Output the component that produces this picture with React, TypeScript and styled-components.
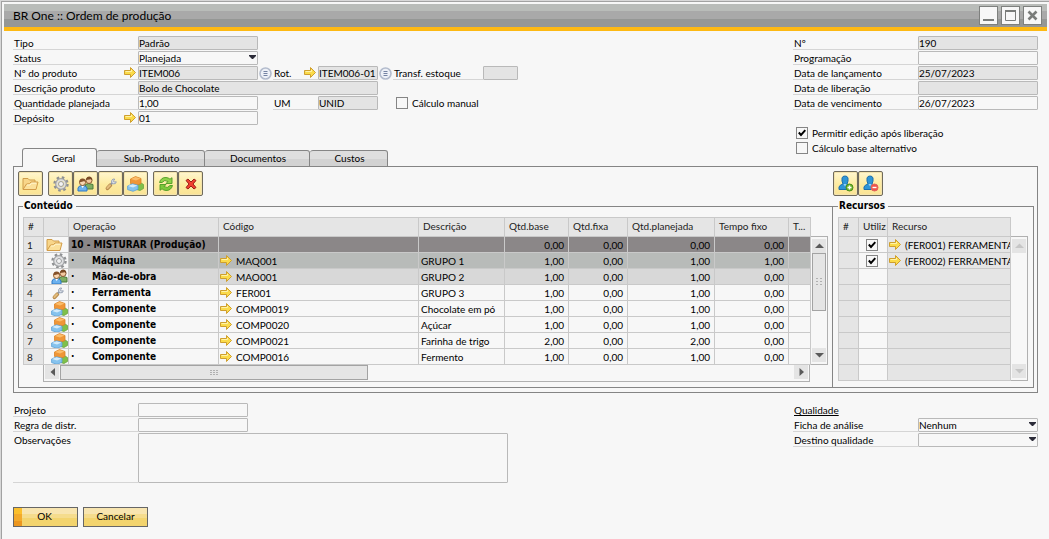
import React, { useId } from "react";
import styled, { createGlobalStyle, css } from "styled-components";

const GlobalStyle = createGlobalStyle`
  *, *::before, *::after { box-sizing: border-box; }
  body {
    margin: 0;
    background: #d8d8d8;
    color: #000;
    font: 10px/13px Lato, "Open Sans", sans-serif;
  }
  button, input, select, textarea { font: inherit; color: inherit; margin: 0; border-radius: 0; }
`;

const boldFace = css`
  font-family: "DejaVu Sans Condensed", "DejaVu Sans", sans-serif;
  font-weight: 700;
`;

/* ---------- window ---------- */

const Window = styled.main`
  min-height: calc(100vh - 1px);
  margin: 1px 0 0 1px;
  padding: 2px;
  border: solid #a2a2a2;
  border-width: 1px 0 0 1px;
  background: #f7f7f7;
`;

const TitleBar = styled.header`
  display: flex;
  align-items: center;
  justify-content: space-between;
  height: 27px;
  padding: 0 5px 0 9px;
  border-bottom: 4px solid #fdb913;
  background: linear-gradient(#b9bcb9 0 7px, #a9a9a9 7px 15px, #959795 15px);
`;

const Title = styled.h1`
  margin: 0;
  padding-top: 1px;
  font-size: 12px;
  line-height: 16px;
  font-weight: 400;
`;

const WindowButtons = styled.div`
  display: flex;
  gap: 3px;
`;

const WindowButton = styled.button`
  display: grid;
  place-items: center;
  width: 19px;
  height: 19px;
  padding: 0;
  border: 1px solid #7e807e;
  background: #f7f7f7;
`;

const Content = styled.form`
  padding: 5px 9px 10px 9px;
`;

/* ---------- form ---------- */

const TopArea = styled.div`
  display: grid;
  grid-template-columns: 1fr 245px;
  grid-template-rows: auto 1fr;
`;

const FormColumn = styled.section`
  display: flex;
  flex-direction: column;
  gap: 1px;
`;

const SideColumn = styled(FormColumn)`
  grid-column: 2;
  grid-row: 1 / span 2;
  padding-bottom: 12px;
`;

const FormRow = styled.div`
  display: flex;
  min-height: 14px;
`;

const Label = styled.label<{ $w?: number }>`
  display: flex;
  align-items: flex-start;
  justify-content: space-between;
  flex: none;
  width: ${(p) => p.$w ?? 125}px;
  padding: 1px 2px 0 1px;
  line-height: 12px;
  border-bottom: 1px solid #d5d5d5;
  white-space: nowrap;
`;

const fieldBox = css`
  border: 1px solid #b9b9b9;
  border-radius: 1px;
  background: #f7f7f7;
  outline: none;
`;

const Input = styled.input<{ $w?: number }>`
  ${fieldBox}
  flex: none;
  width: ${(p) => p.$w ?? 120}px;
  height: 14px;
  padding: 0;
  line-height: 12px;
  &:read-only { background: #e4e4e4; }
`;

const SelectBox = styled.span`
  position: relative;
  display: flex;
  width: 120px;
  height: 14px;
  & > svg { position: absolute; top: 4px; right: 2px; pointer-events: none; }
`;

const Select = styled.select`
  ${fieldBox}
  appearance: none;
  width: 100%;
  height: 14px;
  padding: 0;
  line-height: 12px;
`;

const TextArea = styled.textarea`
  ${fieldBox}
  width: 370px;
  height: 50px;
  resize: none;
`;

const PickButton = styled.button`
  display: grid;
  place-items: center;
  width: 15px;
  height: 14px;
  padding: 0;
  border: 0;
  background: none;
`;

const CheckLabel = styled.label<{ $indent?: number }>`
  display: flex;
  align-items: center;
  gap: 4px;
  height: 14px;
  padding-left: ${(p) => p.$indent ?? 3}px;
`;

const CheckList = styled.div`
  display: flex;
  flex-direction: column;
  gap: 1px;
  margin-top: 15px;
`;

const CheckWrap = styled.span`
  position: relative;
  display: inline-flex;
  width: 12px;
  height: 12px;
  & > svg { position: absolute; top: 2px; left: 2px; pointer-events: none; visibility: hidden; }
  & > input:checked + svg { visibility: visible; }
`;

const CheckInput = styled.input`
  appearance: none;
  width: 12px;
  height: 12px;
  border: 1px solid #858585;
  background: #f7f7f7;
`;

const SectionTitle = styled.h2`
  height: 14px;
  margin: 0;
  padding: 1px 1px 0;
  font-size: 10px;
  line-height: 12px;
  font-weight: 400;
  text-decoration: underline;
`;

/* ---------- tabs and panel ---------- */

const TabList = styled.div`
  position: relative;
  z-index: 1;
  display: flex;
  align-items: flex-end;
  align-self: end;
  padding-left: 9px;
`;

const Tab = styled.button<{ $w: number; $active?: boolean }>`
  width: ${(p) => p.$w}px;
  height: ${(p) => (p.$active ? 19 : 17)}px;
  padding: 0 0 1px 2px;
  border: solid #858585;
  border-width: ${(p) => (p.$active ? "1px 1px 0 1px" : "1px 1px 1px 0")};
  border-radius: 3px 3px 0 0;
  background: ${(p) => (p.$active ? "#f7f7f7" : "linear-gradient(#dedede 50%, #d2d2d2 50%)")};
  ${(p) => p.$active && css`padding: 0 0 0 8px;`}
`;

const Panel = styled.section`
  display: grid;
  grid-template-columns: minmax(0, 1fr) 202px;
  margin-top: -1px;
  padding: 4px 3px 4px 4px;
  border: 1px solid #858585;
`;

const Pane = styled.div`
  display: flex;
  flex-direction: column;
  gap: 4px;
`;

const Toolbar = styled.div<{ $inset?: boolean }>`
  display: flex;
  gap: 5px;
  padding-left: ${(p) => (p.$inset ? 1 : 0)}px;
`;

const ToolGroup = styled.div`
  display: flex;
`;

const ToolButton = styled.button`
  display: grid;
  place-items: center;
  width: 25px;
  height: 25px;
  padding: 0;
  border: 1px solid #6f6a5c;
  border-radius: 2px;
  background: linear-gradient(#fff6d0, #fdeb9f 55%, #fae396);
  box-shadow: inset 0 0 0 1px #f3e3ad;
`;

const Group = styled.fieldset<{ $open?: boolean }>`
  flex: 1;
  min-width: 0;
  margin: 0;
  padding: 5px ${(p) => (p.$open ? 4 : 5)}px 5px ${(p) => (p.$open ? 4 : 5)}px;
  border: solid #858585;
  border-width: 1px ${(p) => (p.$open ? 0 : 1)}px 1px 1px;
`;

const Legend = styled.legend`
  ${boldFace}
  padding: 0 3px 0 1px;
  line-height: 12px;
`;

const GridArea = styled.div`
  display: grid;
  grid-template-columns: minmax(0, 1fr) 17px;
`;

/* ---------- data grids ---------- */

const Table = styled.table`
  width: 100%;
  table-layout: fixed;
  border-collapse: separate;
  border-spacing: 0;
`;

const Col = styled.col<{ $w?: number }>`
  width: ${(p) => (p.$w ? `${p.$w}px` : "auto")};
`;

const HeadCell = styled.th`
  height: 20px;
  padding: 0 3px 2px 4px;
  border: solid #c9c9c9;
  border-width: 1px 1px 1px 0;
  background: #e5e5e5;
  color: #222;
  font-weight: 400;
  line-height: 12px;
  text-align: left;
  white-space: nowrap;
  overflow: hidden;
  &:first-child { border-left-width: 1px; }
`;

type Tone = "group" | "selected" | "near" | "plain" | "muted";

const tones: Record<Tone, string> = {
  group: "#8b8788",
  selected: "#b8bbb9",
  near: "#d8d8d8",
  plain: "#f7f7f7",
  muted: "#e5e5e5",
};

const Cell = styled.td<{ $tone?: Tone; $num?: boolean; $flush?: boolean; $bold?: boolean }>`
  height: 16px;
  padding: 0 ${(p) => (p.$num ? 4 : 0)}px 0 ${(p) => (p.$flush ? 1 : 2)}px;
  border: solid #c9c9c9;
  border-width: 0 1px 1px 0;
  background: ${(p) => tones[p.$tone ?? "plain"]};
  line-height: 12px;
  text-align: ${(p) => (p.$num ? "right" : "left")};
  white-space: nowrap;
  overflow: hidden;
  ${(p) => p.$bold && boldFace}
  & svg { display: block; }
`;

const NumberCell = styled(Cell)`
  padding-left: 3px;
  border-left-width: 1px;
  color: #222;
`;

const IconBox = styled.span<{ $right?: boolean }>`
  display: flex;
  height: 15px;
  align-items: center;
  padding-left: ${(p) => (p.$right ? 6 : 1)}px;
`;

const Linked = styled.span`
  display: flex;
  align-items: center;
  gap: 4px;
  overflow: hidden;
  & > svg { flex: none; }
`;

const Bullet = styled.span`
  display: inline-block;
  width: 21px;
`;

/* ---------- scroll bars ---------- */

const VScroll = styled.div`
  display: flex;
  flex-direction: column;
  justify-content: space-between;
  margin-top: 19px;
  padding: 2px 1px;
  border: solid #b0b0b0;
  border-width: 1px 1px 1px 0;
`;

const HScroll = styled.div`
  display: flex;
  justify-content: space-between;
  height: 17px;
  margin: 0 1px 0 20px;
  padding: 0 1px 2px;
  border: solid #b0b0b0;
  border-width: 0 1px 1px 1px;
`;

const ScrollButton = styled.button`
  display: grid;
  place-items: center;
  flex: none;
  width: 14px;
  height: 14px;
  padding: 0;
  border: 0;
  background: #e4e4e4;
`;

const VThumb = styled.div`
  display: grid;
  place-items: center;
  width: 14px;
  height: 58px;
  margin-bottom: auto;
  border: 1px solid #a3a3a3;
  background: #e5e5e5;
`;

const HThumb = styled.div`
  display: grid;
  place-items: center;
  width: 308px;
  height: 15px;
  margin: 0 auto 0 1px;
  border: 1px solid #a3a3a3;
  background: #e5e5e5;
`;

/* ---------- footer ---------- */

const BottomArea = styled.div`
  display: grid;
  grid-template-columns: 1fr 245px;
  margin-top: 10px;
`;

const Actions = styled.footer`
  display: flex;
  gap: 5px;
  margin-top: 24px;
`;

const ActionButton = styled.button<{ $primary?: boolean }>`
  width: 65px;
  height: 20px;
  padding: 0 0 1px;
  border: 1px solid #666;
  background: ${(p) => p.$primary && "linear-gradient(#fbc02d 0 35%, #f3aa2c 35% 70%, #ec961f 70%) left / 8px 100% no-repeat, "}
    linear-gradient(#f8e5b0 0 6px, #f5dc8d 6px 10px, #f3d46e 10px);
  ${(p) => p.$primary && css`padding-right: 2px;`}
`;

/* ---------- icons ---------- */

const ArrowIcon = () => (
  <svg width="12" height="11" viewBox="0 0 12 11">
    <path d="M.5 3.500h6v-3L11.500 5.500l-5 5v-3h-6z" fill="#fbdb4a" stroke="#cf9f2e" />
    <path d="M1.500 4.500h6v-1.500" fill="none" stroke="#fff3a8" />
  </svg>
);

const ListIcon = () => (
  <svg width="13" height="13" viewBox="0 0 13 13">
    <circle cx="6.500" cy="6.500" r="5.500" fill="#eef1f7" stroke="#b3bccd" strokeWidth="1.600" />
    <path d="M4.500 4.500h4M4.500 6.500h4M4.500 8.500h4" stroke="#7584a3" />
  </svg>
);

const CaretIcon = () => (
  <svg width="7" height="5" viewBox="0 0 7 5">
    <path d="M0 0h7v1L4 4H3L0 1z" fill="#2b2b38" />
  </svg>
);

const CheckIcon = () => (
  <svg width="8" height="8" viewBox="0 0 8 8">
    <path d="M.8 3.500L3 6 7.300 1.200" fill="none" stroke="#000" strokeWidth="1.900" />
  </svg>
);

const GripIcon = ({ vertical }: { vertical?: boolean }) => (
  <svg width={vertical ? 6 : 8} height={vertical ? 8 : 6} viewBox={vertical ? "0 0 6 8" : "0 0 8 6"}>
    <path
      d={vertical ? "M0 .5h6M0 3.500h6M0 6.500h6" : "M0 .5h8M0 2.500h8M0 4.500h8"}
      stroke="#b0b0b0"
      strokeDasharray={vertical ? "2 2" : "2 1"}
    />
  </svg>
);

const triangles = {
  up: "M0 6L4.500 1.500 9 6z",
  down: "M0 2h9L4.500 6.500z",
  left: "M7 0v8L2.500 4z",
  right: "M2.500 0v8L7 4z",
};

const Triangle = ({ dir, off }: { dir: keyof typeof triangles; off?: boolean }) => (
  <svg width="9" height="8" viewBox="0 0 9 8">
    <path d={triangles[dir]} fill={off ? "#c6c6c6" : "#5a5a5a"} />
  </svg>
);

const FolderIcon = () => (
  <svg width="17" height="15" viewBox="0 0 17 15">
    <path d="M1 13V2.500h5l1.500 1.500H13V6" fill="#f8d68a" stroke="#cf9d4b" />
    <path d="M1 13.500L4.500 8l3-.3L9 6h7l-2 7.500z" fill="#fbe09a" stroke="#d39c48" strokeLinejoin="round" />
    <path d="M5 9h3l1.500-1.800h4.700" fill="none" stroke="#fff6cf" />
  </svg>
);

const GearIcon = () => (
  <svg width="16" height="16" viewBox="0 0 16 16">
    <circle cx="8" cy="8" r="6.400" fill="none" stroke="#8e9092" strokeWidth="2.600" strokeDasharray="2.500 2.527" />
    <circle cx="8" cy="8" r="5" fill="none" stroke="#a3a5a7" strokeWidth="1.800" />
    <circle cx="8" cy="8" r="4" fill="none" stroke="#dcdddf" strokeWidth="1.400" />
    <circle cx="8" cy="8" r="2.500" fill="#f3f3f3" stroke="#9b9d9f" />
  </svg>
);

const PeopleIcon = () => (
  <svg width="17" height="16" viewBox="0 0 17 16">
    <path d="M8.500 13V8.500Q11 6.500 16 8.500V13z" fill="#7fae62" stroke="#4d7c3c" />
    <circle cx="12" cy="4.500" r="3" fill="#f3c9a0" stroke="#8a5a32" />
    <path d="M9 4Q9.500.5 12.500.6 15.500 1 15.300 4.500L14 3.300z" fill="#7a4a26" />
    <path d="M1 15v-3Q1.500 9.500 5.500 9.500T10 12v3z" fill="#6cb2ef" stroke="#2f78c4" />
    <path d="M4.300 10l1.300 2 1.400-2z" fill="#fff" />
    <circle cx="5.500" cy="6.500" r="3" fill="#f8d6b2" stroke="#94602f" />
    <path d="M2.300 6.500Q2.300 2.500 5.600 2.600 9 2.700 8.800 6.500L7.500 5z" fill="#85512a" />
  </svg>
);

const WrenchIcon = () => (
  <svg width="14" height="14" viewBox="0 0 14 14">
    <path d="M3.500 11.300L6.300 8.300" stroke="#b78a4c" strokeWidth="3.800" strokeLinecap="round" />
    <path d="M3.400 11L6 8.300" stroke="#e3bd7c" strokeWidth="2" strokeLinecap="round" />
    <path d="M7 7.300L8.800 5.600" stroke="#8d97a6" strokeWidth="2" />
    <path d="M11 2.300A2.400 2.400 0 1 0 12.300 4.800L10.300 5 9.300 3.900z" fill="#dbe1ea" stroke="#98a2b3" />
  </svg>
);

const BlocksIcon = () => (
  <svg width="17" height="16" viewBox="0 0 17 16">
    <path d="M9.500 9l4.500-2 2.500 1.500v4L13 14.500 9.500 13.500z" fill="#7fc04a" stroke="#6aa641" strokeWidth=".8" />
    <path d="M3.500 3L8.500.6 14 2.500v5L9 9.500 3.500 7.500z" fill="#ef9637" stroke="#d98326" strokeWidth=".8" strokeLinejoin="round" />
    <path d="M4 3.100L8.500 1l5 1.600L9 4.600z" fill="#fbbd6b" />
    <path d="M.6 10L5.500 7.800l5.500 1.500v4l-5 2-5.400-1.700z" fill="#86c3ee" stroke="#5b9fd6" strokeWidth=".8" strokeLinejoin="round" />
    <path d="M1 10.100l4.500-1.900 5 1.300-4.500 1.900z" fill="#d3ebfb" />
  </svg>
);

const RefreshIcon = () => (
  <svg width="16" height="16" viewBox="0 0 16 16">
    <path d="M1.500 6.500Q3 1.300 8 1.500 10.500 1.700 12 3.200L14 1.700V7.500H8L10 5.500Q6.500 3 4 6.500z" fill="#8fd14a" stroke="#4c9a22" strokeWidth=".9" strokeLinejoin="round" />
    <path d="M14.500 9.500Q13 14.700 8 14.500 5.500 14.300 4 12.800L2 14.300V8.500H8L6 10.500Q9.500 13 12 9.500z" fill="#7cc83a" stroke="#4c9a22" strokeWidth=".9" strokeLinejoin="round" />
  </svg>
);

const DeleteIcon = () => (
  <svg width="12" height="12" viewBox="0 0 12 12">
    <path d="M3 1l3 3 3-3 2 1.500L8 6l3 3.500L9 11 6 8l-3 3-2-1.500L4 6 1 2.500z" fill="#f0402f" stroke="#9c2018" strokeLinejoin="round" />
  </svg>
);

const PersonIcon = ({ remove }: { remove?: boolean }) => (
  <svg width="16" height="17" viewBox="0 0 16 17">
    <path d="M1 14.500V12Q1.500 10 5 9L4 6V3Q4.500 1 7 1t3 2v3L9 9q3.500 1 4 3v2.500z" fill="#2f95d6" stroke="#1c6fae" />
    <path d="M5.500 9L7 11.500 8.500 9z" fill="#9dd3f5" />
    <circle cx="11.500" cy="12.500" r="3.500" fill={remove ? "#f0544a" : "#6fb52c"} stroke={remove ? "#e0655c" : "#4b8d18"} />
    <path d={remove ? "M9.500 12.500h4" : "M9.500 12.500h4M11.500 10.500v4"} stroke="#fff" strokeWidth="1.400" />
  </svg>
);

/* ---------- small parts ---------- */

const Check = ({ id, checked, label }: { id?: string; checked?: boolean; label?: string }) => (
  <CheckWrap>
    <CheckInput id={id} type="checkbox" defaultChecked={checked} aria-label={label} />
    <CheckIcon />
  </CheckWrap>
);

type FieldProps = {
  label: string;
  value?: string;
  readOnly?: boolean;
  link?: boolean;
  labelWidth?: number;
  width?: number;
};

const Field = ({ label, value = "", readOnly, link, labelWidth, width }: FieldProps) => {
  const id = useId();
  return (
    <>
      <Label htmlFor={id} $w={labelWidth}>
        {label}
        {link && <ArrowIcon />}
      </Label>
      <Input id={id} defaultValue={value} readOnly={readOnly} $w={width} />
    </>
  );
};

const SelectField = ({ label, value }: { label: string; value: string }) => {
  const id = useId();
  return (
    <FormRow>
      <Label htmlFor={id}>{label}</Label>
      <SelectBox>
        <Select id={id} defaultValue={value}>
          <option>{value}</option>
        </Select>
        <CaretIcon />
      </SelectBox>
    </FormRow>
  );
};

const VerticalScroll = ({ off }: { off?: boolean }) => (
  <VScroll>
    <ScrollButton type="button" aria-label="Rolar para cima"><Triangle dir="up" off={off} /></ScrollButton>
    {!off && <VThumb><GripIcon vertical /></VThumb>}
    <ScrollButton type="button" aria-label="Rolar para baixo"><Triangle dir="down" off={off} /></ScrollButton>
  </VScroll>
);

/* ---------- data ---------- */

type Row = {
  icon: React.ReactNode;
  name: string;
  code?: string;
  desc?: string;
  nums: [string, string, string, string];
  tone: Tone;
};

const one: Row["nums"] = ["1,00", "0,00", "1,00", "0,00"];

const rows: Row[] = [
  { icon: <FolderIcon />, name: "10 - MISTURAR (Produção)", nums: ["0,00", "0,00", "0,00", "0,00"], tone: "group" },
  { icon: <GearIcon />, name: "Máquina", code: "MAQ001", desc: "GRUPO 1", nums: ["1,00", "0,00", "1,00", "1,00"], tone: "selected" },
  { icon: <PeopleIcon />, name: "Mão-de-obra", code: "MAO001", desc: "GRUPO 2", nums: one, tone: "near" },
  { icon: <WrenchIcon />, name: "Ferramenta", code: "FER001", desc: "GRUPO 3", nums: one, tone: "plain" },
  { icon: <BlocksIcon />, name: "Componente", code: "COMP0019", desc: "Chocolate em pó", nums: one, tone: "plain" },
  { icon: <BlocksIcon />, name: "Componente", code: "COMP0020", desc: "Açúcar", nums: one, tone: "plain" },
  { icon: <BlocksIcon />, name: "Componente", code: "COMP0021", desc: "Farinha de trigo", nums: ["2,00", "0,00", "2,00", "0,00"], tone: "plain" },
  { icon: <BlocksIcon />, name: "Componente", code: "COMP0016", desc: "Fermento", nums: one, tone: "plain" },
];

const resources = ["(FER001) FERRAMENTA", "(FER002) FERRAMENTA", "", "", "", "", "", "", ""];

const contentHeads = ["#", "", "Operação", "Código", "Descrição", "Qtd.base", "Qtd.fixa", "Qtd.planejada", "Tempo fixo", "T..."];
const contentWidths = [21, 25, 150, undefined, 86, 64, 59, 87, 74, 22];

const ContentTable = () => (
  <Table>
    <colgroup>{contentWidths.map((w, i) => <Col key={i} $w={w} />)}</colgroup>
    <thead>
      <tr>{contentHeads.map((h, i) => <HeadCell key={i} scope="col">{h}</HeadCell>)}</tr>
    </thead>
    <tbody>
      {rows.map((r, i) => (
        <tr key={i}>
          <NumberCell $tone="muted">{i + 1}</NumberCell>
          <Cell $flush><IconBox $right={r.tone !== "group"}>{r.icon}</IconBox></Cell>
          <Cell $tone={r.tone} $bold>
            {r.code && <Bullet>·</Bullet>}
            {r.name}
          </Cell>
          <Cell $tone={r.tone} $flush>{r.code && <Linked><ArrowIcon />{r.code}</Linked>}</Cell>
          <Cell $tone={r.tone}>{r.desc}</Cell>
          {r.nums.map((n, j) => <Cell key={j} $tone={r.tone} $num>{n}</Cell>)}
          <Cell $tone={r.tone} />
        </tr>
      ))}
    </tbody>
  </Table>
);

const ResourceTable = () => (
  <Table>
    <colgroup><Col $w={21} /><Col $w={29} /><Col /></colgroup>
    <thead>
      <tr>
        <HeadCell scope="col">#</HeadCell>
        <HeadCell scope="col">Utiliz</HeadCell>
        <HeadCell scope="col">Recurso</HeadCell>
      </tr>
    </thead>
    <tbody>
      {resources.map((r, i) => (
        <tr key={i}>
          <NumberCell $tone="muted" />
          <Cell $flush>{r && <IconBox $right><Check checked label={`Utilizar ${r}`} /></IconBox>}</Cell>
          <Cell $tone="muted" $flush>{r && <Linked><ArrowIcon />{r}</Linked>}</Cell>
        </tr>
      ))}
    </tbody>
  </Table>
);

const Tool = ({ name, children }: { name: string; children: React.ReactNode }) => (
  <ToolButton type="button" aria-label={name}>{children}</ToolButton>
);

export default function App() {
  return (
    <>
      <GlobalStyle />
      <Window>
        <TitleBar>
          <Title>BR One :: Ordem de produção</Title>
          <WindowButtons>
            <WindowButton type="button" aria-label="Minimizar">
              <svg width="11" height="11"><path d="M0 10h11" stroke="#7a7c7a" strokeWidth="2" /></svg>
            </WindowButton>
            <WindowButton type="button" aria-label="Maximizar">
              <svg width="11" height="11"><path d="M.5 1v9.500h10V1" fill="none" stroke="#7a7c7a" /><path d="M0 1h11" stroke="#7a7c7a" strokeWidth="2" /></svg>
            </WindowButton>
            <WindowButton type="button" aria-label="Fechar">
              <svg width="11" height="11"><path d="M1.500 1.500l8 8M9.500 1.500l-8 8" stroke="#7a7c7a" strokeWidth="2.600" /></svg>
            </WindowButton>
          </WindowButtons>
        </TitleBar>

        <Content onSubmit={(e) => e.preventDefault()}>
          <TopArea>
            <FormColumn>
              <FormRow><Field label="Tipo" value="Padrão" readOnly /></FormRow>
              <SelectField label="Status" value="Planejada" />
              <FormRow>
                <Field label="Nº do produto" value="ITEM006" readOnly link />
                <PickButton type="button" aria-label="Escolher produto"><ListIcon /></PickButton>
                <Field label="Rot." value="ITEM006-01" readOnly link labelWidth={45} width={60} />
                <PickButton type="button" aria-label="Escolher roteiro"><ListIcon /></PickButton>
                <Field label="Transf. estoque" readOnly labelWidth={90} width={35} />
              </FormRow>
              <FormRow><Field label="Descrição produto" value="Bolo de Chocolate" readOnly width={240} /></FormRow>
              <FormRow>
                <Field label="Quantidade planejada" value="1,00" />
                <PickButton as="span" />
                <Field label="UM" value="UNID" readOnly labelWidth={45} width={60} />
                <CheckLabel $indent={18}><Check />Cálculo manual</CheckLabel>
              </FormRow>
              <FormRow><Field label="Depósito" value="01" link /></FormRow>
            </FormColumn>

            <TabList role="tablist">
              <Tab type="button" role="tab" aria-selected $w={75} $active>Geral</Tab>
              <Tab type="button" role="tab" $w={108}>Sub-Produto</Tab>
              <Tab type="button" role="tab" $w={105}>Documentos</Tab>
              <Tab type="button" role="tab" $w={78}>Custos</Tab>
            </TabList>

            <SideColumn>
              <FormRow><Field label="Nº" value="190" readOnly /></FormRow>
              <FormRow><Field label="Programação" /></FormRow>
              <FormRow><Field label="Data de lançamento" value="25/07/2023" readOnly /></FormRow>
              <FormRow><Field label="Data de liberação" readOnly /></FormRow>
              <FormRow><Field label="Data de vencimento" value="26/07/2023" /></FormRow>
              <CheckList>
                <CheckLabel><Check checked />Permitir edição após liberação</CheckLabel>
                <CheckLabel><Check />Cálculo base alternativo</CheckLabel>
              </CheckList>
            </SideColumn>
          </TopArea>

          <Panel role="tabpanel">
            <Pane>
              <Toolbar>
                <ToolGroup><Tool name="Abrir"><FolderIcon /></Tool></ToolGroup>
                <ToolGroup>
                  <Tool name="Máquina"><GearIcon /></Tool>
                  <Tool name="Mão-de-obra"><PeopleIcon /></Tool>
                  <Tool name="Ferramenta"><WrenchIcon /></Tool>
                  <Tool name="Componente"><BlocksIcon /></Tool>
                </ToolGroup>
                <ToolGroup>
                  <Tool name="Atualizar"><RefreshIcon /></Tool>
                  <Tool name="Excluir"><DeleteIcon /></Tool>
                </ToolGroup>
              </Toolbar>
              <Group $open>
                <Legend>Conteúdo</Legend>
                <GridArea>
                  <ContentTable />
                  <VerticalScroll />
                  <HScroll>
                    <ScrollButton type="button" aria-label="Rolar para a esquerda"><Triangle dir="left" /></ScrollButton>
                    <HThumb><GripIcon /></HThumb>
                    <ScrollButton type="button" aria-label="Rolar para a direita"><Triangle dir="right" /></ScrollButton>
                  </HScroll>
                </GridArea>
              </Group>
            </Pane>
            <Pane>
              <Toolbar $inset>
                <ToolGroup>
                  <Tool name="Adicionar recurso"><PersonIcon /></Tool>
                  <Tool name="Remover recurso"><PersonIcon remove /></Tool>
                </ToolGroup>
              </Toolbar>
              <Group>
                <Legend>Recursos</Legend>
                <GridArea>
                  <ResourceTable />
                  <VerticalScroll off />
                </GridArea>
              </Group>
            </Pane>
          </Panel>

          <BottomArea>
            <FormColumn>
              <FormRow><Field label="Projeto" width={110} /></FormRow>
              <FormRow><Field label="Regra de distr." width={110} /></FormRow>
              <FormRow>
                <Label htmlFor="notes">Observações</Label>
                <TextArea id="notes" />
              </FormRow>
            </FormColumn>
            <FormColumn>
              <SectionTitle>Qualidade</SectionTitle>
              <SelectField label="Ficha de análise" value="Nenhum" />
              <SelectField label="Destino qualidade" value="" />
            </FormColumn>
          </BottomArea>

          <Actions>
            <ActionButton type="submit" $primary>OK</ActionButton>
            <ActionButton type="button">Cancelar</ActionButton>
          </Actions>
        </Content>
      </Window>
    </>
  );
}
